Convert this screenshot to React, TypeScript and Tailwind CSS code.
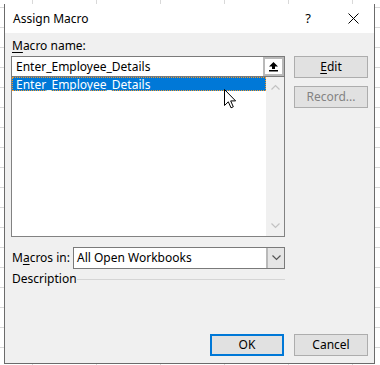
import React from 'react';

const Chevron = ({ down = false, color = '#c2c2c2' }: { down?: boolean; color?: string }) => (
  <svg width="9" height="6" viewBox="0 0 9 6" className="block">
    <polyline
      points={down ? '0.5,0.5 4.5,4.5 8.5,0.5' : '0.5,5.5 4.5,1.5 8.5,5.5'}
      fill="none"
      stroke={color}
      strokeWidth="1.2"
    />
  </svg>
);

const PointerCursor = () => (
  <svg width="13" height="20" viewBox="0 0 13 20" className="block">
    <path
      d="M0.5 0.5 L0.5 16.5 L4.3 12.8 L7 18.8 L9.3 17.8 L6.7 11.9 L11.6 11.9 Z"
      fill="#ffffff"
      stroke="#000000"
      strokeWidth="1"
      strokeLinejoin="miter"
    />
  </svg>
);

const UploadIcon = () => (
  <svg width="9" height="10" viewBox="0 0 9 10" className="block">
    <path d="M4.5 0 L9 4.5 L6 4.5 L6 7 L3 7 L3 4.5 L0 4.5 Z" fill="#000" />
    <rect x="0" y="8" width="9" height="1.5" fill="#000" />
  </svg>
);

export default function App() {
  return (
    <div
      className="relative w-[380px] h-[365px] overflow-hidden bg-white pt-[4px] pl-[4px] text-[12px] text-black bg-[linear-gradient(to_right,#d9d9d9_1px,transparent_1px),linear-gradient(to_bottom,#d9d9d9_1px,transparent_1px)] bg-[size:64px_20px] bg-[position:32px_7px]"
      style={{ fontFamily: '"Noto Sans", "Segoe UI", Arial, sans-serif' }}
    >
      <div className="w-[371px] h-[360px] border-x border-b border-[#6b6b6b] bg-[#f0f0f0] flex flex-col">
        {/* Title bar */}
        <div className="h-[29px] bg-white flex items-center pl-[8px] shrink-0">
          <span className="leading-none text-[12px]">Assign Macro</span>
          <div className="ml-auto w-[48px] h-full flex items-center justify-center text-[13px] leading-none">?</div>
          <div className="w-[42px] h-full flex items-center justify-center">
            <svg width="11" height="11" viewBox="0 0 11 11" className="block">
              <path d="M0.5 0.5 L10.5 10.5 M10.5 0.5 L0.5 10.5" stroke="#000" strokeWidth="1" />
            </svg>
          </div>
        </div>

        {/* Body */}
        <div className="flex-1 flex flex-col px-[6px] pt-[5px] pb-[7px]">
          <div className="h-[16px] leading-[16px] pl-[1px]">
            <span className="underline underline-offset-2">M</span>acro name:
          </div>

          <div className="mt-[2px] flex gap-[9px]">
            {/* Left column */}
            <div className="w-[274px] flex flex-col">
              <div className="h-[21px] border border-[#7a7a7a] bg-white flex">
                <div className="flex-1 pl-[4px] leading-[19px]">Enter_Employee_Details</div>
                <div className="w-[21px] h-full border-2 border-[#b9b9b9] bg-white flex items-center justify-center">
                  <UploadIcon />
                </div>
              </div>

              <div className="relative h-[160px] border-x border-b border-[#828282] bg-white flex">
                <div className="flex-1">
                  <div className="h-[14px] bg-[#0078d7] border border-dotted border-[#f39a2c] text-white leading-[13px] pl-[3px]">
                    Enter_Employee_Details
                  </div>
                </div>
                <div className="w-[18px] bg-[#f0f0f0] flex flex-col items-center justify-between py-[7px]">
                  <Chevron />
                  <Chevron down />
                </div>
                <div className="absolute left-[212px] top-[12px]">
                  <PointerCursor />
                </div>
              </div>

              <div className="mt-[10px] flex items-center">
                <div className="w-[62px] pl-[1px]">
                  M<span className="underline underline-offset-2">a</span>cros in:
                </div>
                <div className="w-[212px] h-[22px] border border-[#7a7a7a] bg-white flex">
                  <div className="flex-1 pl-[3px] leading-[20px]">All Open Workbooks</div>
                  <div className="w-[18px] h-full border-l-2 border-[#b9b9b9] bg-[#e5e5e5] flex items-center justify-center">
                    <Chevron down color="#555555" />
                  </div>
                </div>
              </div>

              <div className="mt-[2px] h-[16px] flex items-center">
                <span className="pl-[1px] leading-[16px]">Description</span>
                <div className="ml-auto w-[210px] h-px bg-[#d5d5d5]" />
              </div>
            </div>

            {/* Right column */}
            <div className="w-[74px] flex flex-col gap-[8px]">
              <button className="h-[22px] bg-[#e1e1e1] border border-[#adadad] leading-[20px]">
                <span className="underline underline-offset-2">E</span>dit
              </button>
              <button className="h-[22px] bg-[#e1e1e1] border border-[#adadad] leading-[20px] text-[#838383]">
                Record...
              </button>
            </div>
          </div>

          <div className="mt-auto flex justify-end gap-[10px]">
            <button className="w-[74px] h-[22px] bg-[#e1e1e1] border-2 border-[#0078d7] leading-[18px]">OK</button>
            <button className="w-[74px] h-[22px] bg-[#e1e1e1] border border-[#adadad] leading-[20px]">Cancel</button>
          </div>
        </div>
      </div>
    </div>
  );
}
